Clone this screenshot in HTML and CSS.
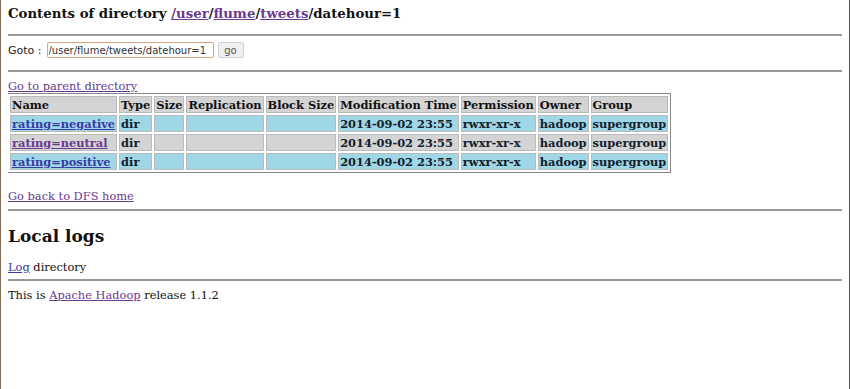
FILE: index.html
```html
<!DOCTYPE html>
<html lang="en">
<head>
    <meta charset="UTF-8">
    <title>HDFS:/user/flume/tweets/datehour=1</title>
    <link rel="stylesheet" href="styles.css">
</head>
<body>
    <h1 class="title">Contents of directory <a href="#" class="visited">/user</a>/<a href="#" class="visited">flume</a>/<a href="#" class="visited">tweets</a>/datehour=1</h1>
    <hr class="rule-top">
    <form class="goto" onsubmit="return false">
        <span class="goto-label">Goto :</span>
        <input type="text" class="goto-input" value="/user/flume/tweets/datehour=1">
        <button class="goto-btn">go</button>
    </form>
    <hr class="rule-goto">
    <div class="line parent"><a href="#" class="visited">Go to parent directory</a></div>
    <table class="listing">
        <tr class="head">
            <td>Name</td><td>Type</td><td>Size</td><td>Replication</td><td>Block Size</td><td>Modification Time</td><td>Permission</td><td>Owner</td><td>Group</td>
        </tr>
        <tr class="rowA">
            <td><a href="#">rating=negative</a></td><td>dir</td><td></td><td></td><td></td><td>2014-09-02 23:55</td><td>rwxr-xr-x</td><td>hadoop</td><td>supergroup</td>
        </tr>
        <tr class="rowB">
            <td><a href="#" class="visited">rating=neutral</a></td><td>dir</td><td></td><td></td><td></td><td>2014-09-02 23:55</td><td>rwxr-xr-x</td><td>hadoop</td><td>supergroup</td>
        </tr>
        <tr class="rowA">
            <td><a href="#">rating=positive</a></td><td>dir</td><td></td><td></td><td></td><td>2014-09-02 23:55</td><td>rwxr-xr-x</td><td>hadoop</td><td>supergroup</td>
        </tr>
    </table>
    <div class="line back"><a href="#" class="visited">Go back to DFS home</a></div>
    <hr class="rule-back">
    <h2 class="logs">Local logs</h2>
    <div class="line logdir"><a href="#">Log</a> directory</div>
    <hr class="rule-log">
    <div class="line release">This is <a href="#" class="visited">Apache Hadoop</a> release 1.1.2</div>
</body>
</html>
```

FILE: styles.css
```css
html {
    background: #fff;
    border-left: 1px solid #8a6a50;
    border-right: 1px solid #555;
    min-height: 100%;
}

body {
    margin: 0 7px;
    font-family: "DejaVu Serif", serif;
    font-size: 11.4px;
    color: #111;
}

a {
    color: #3a3aa8;
}

a.visited {
    color: #6a3a8f;
}

.title {
    font-size: 13.3px;
    margin: 4px 0 0;
    line-height: 20px;
}

hr {
    border: none;
    border-top: 2px solid #999;
    margin: 0;
}

.rule-top {
    margin-top: 10px;
}

.goto {
    margin: 6px 0 12px;
    height: 16px;
    display: flex;
    align-items: center;
}

.goto-label {
    font-family: "DejaVu Sans", sans-serif;
    font-size: 11px;
    color: #222;
    margin-right: 5px;
}

.goto-input {
    box-sizing: border-box;
    width: 167px;
    height: 16px;
    padding: 0 1px;
    margin: 0;
    border: 1px solid #e0a088;
    border-radius: 2px;
    font-family: "DejaVu Sans", sans-serif;
    font-size: 10px;
    color: #333;
}

.goto-btn {
    box-sizing: border-box;
    height: 16px;
    width: 26px;
    margin-left: 4px;
    padding: 0;
    border: 1px solid #d0d0d0;
    background: #efefef;
    border-radius: 2px;
    font-family: "DejaVu Sans", sans-serif;
    font-size: 10px;
    color: #555;
}

.line {
    line-height: 14px;
}

.parent {
    margin-top: 7px;
}

.listing {
    border: 1px solid #888;
    border-spacing: 2px;
    font-weight: bold;
    font-size: 11.4px;
    color: #13202c;
    margin-left: -1px;
}

.listing td {
    border: 1px solid #bbb;
    padding: 0 1px;
    height: 15px;
    white-space: nowrap;
}

.head td {
    background: #d4d4d4;
    color: #111;
}

.rowA td {
    background: #9fd7e6;
}

.rowB td {
    background: #d4d4d4;
}

.back {
    margin-top: 16px;
}

.rule-back {
    margin-top: 6px;
}

.logs {
    font-size: 17px;
    line-height: 20px;
    margin: 15px 0 0;
}

.logdir {
    margin-top: 14px;
}

.rule-log {
    margin-top: 5px;
}

.release {
    margin-top: 7px;
}
```
